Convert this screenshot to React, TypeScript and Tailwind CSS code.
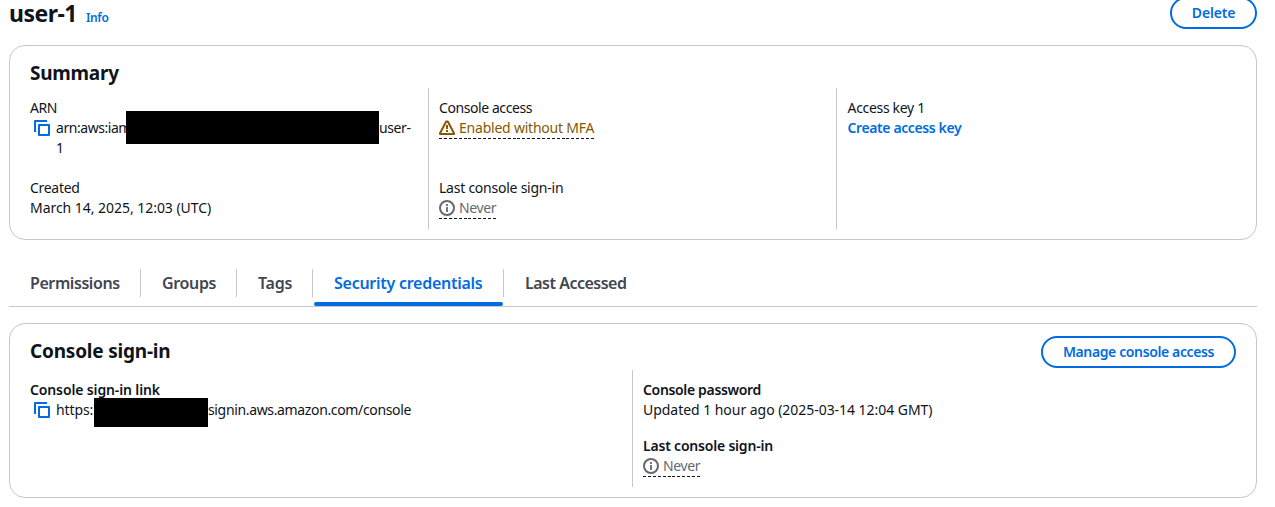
import React from "react";

function CopyIcon() {
  return (
    <svg width="16" height="16" viewBox="0 0 16 16" fill="none" stroke="#006ce0" strokeWidth="2" strokeLinejoin="round" className="mt-[2px] shrink-0">
      <path d="M13 1H1v11" />
      <path d="M5 5h10v10H5z" />
    </svg>
  );
}

function WarningIcon() {
  return (
    <svg width="16" height="16" viewBox="0 0 16 16" fill="none" stroke="#855900" strokeWidth="2" strokeLinejoin="round" className="shrink-0">
      <path d="M7.2 1.5h1.6L15 13.2V14H1v-.8L7.2 1.5Z" />
      <path d="M8 5v4M8 10v2" />
    </svg>
  );
}

function InfoIcon() {
  return (
    <svg width="16" height="16" viewBox="0 0 16 16" fill="none" stroke="#656871" strokeWidth="2" className="shrink-0">
      <circle cx="8" cy="8" r="7" />
      <path d="M8 4v2M8 7v5" strokeWidth="1.8" />
    </svg>
  );
}

function Dashes({ width }: { width: number }) {
  return (
    <svg width={width} height="1" viewBox={`0 0 ${width} 1`} className="block" shapeRendering="crispEdges">
      <path d={`M0 .5H${width}`} stroke="#0f141a" strokeDasharray="3 1.9" />
    </svg>
  );
}

function NeverStatus() {
  return (
    <div>
      <div className="flex h-5 items-center gap-1 text-[#656871]">
        <InfoIcon />
        <span className="tracking-[-0.4px]">Never</span>
      </div>
      <Dashes width={57} />
    </div>
  );
}

export default function App() {
  return (
    <div className="h-[507px] w-full overflow-hidden bg-white pl-[9px] font-['Noto_Sans',sans-serif] text-sm leading-5 text-[#0f141a]">
      <div className="w-[1248px]">
        <header className="flex h-[45px] items-start justify-between">
          <div className="flex items-baseline gap-[9px]">
            <h1 className="text-[23px] leading-[26px] font-bold tracking-[-0.5px]">user-1</h1>
            <a className="text-xs font-semibold tracking-[-0.4px] text-[#006ce0]">Info</a>
          </div>
          <button className="-mt-[3px] h-8 w-[87px] rounded-full border-2 border-[#006ce0] font-semibold tracking-[-0.2px] text-[#006ce0]">Delete</button>
        </header>

        <section className="h-[195px] rounded-2xl border border-[#c6c6cd] pl-5">
          <h2 className="pt-[15px] text-[19px] leading-6 font-bold tracking-[-0.25px]">Summary</h2>
          <div className="mt-[3px] flex h-[141px]">
            <div className="w-[398px] pt-[10px]">
              <div className="tracking-[-0.4px]">ARN</div>
              <div className="flex h-[60px] pl-1">
                <CopyIcon />
                <div className="pl-[6px]">
                  <div className="flex">
                    <span className="w-[70px] tracking-[-0.45px] whitespace-nowrap">arn:aws:iam</span>
                    <span className="relative -mt-[7px] h-[33px] w-[253px] bg-black" />
                    <span className="tracking-[-0.4px]">user-</span>
                  </div>
                  <div className="-mt-[6px]">1</div>
                </div>
              </div>
              <div className="tracking-[-0.3px]">Created</div>
              <div className="tracking-[-0.04px]">March 14, 2025, 12:03 (UTC)</div>
            </div>
            <div className="w-[408px] border-l border-[#c6c6cd] pt-[10px] pl-[10px]">
              <div className="tracking-[-0.42px]">Console access</div>
              <div className="flex h-5 items-center gap-1 text-[#855900]">
                <WarningIcon />
                <span className="tracking-[-0.22px]">Enabled without MFA</span>
              </div>
              <Dashes width={155} />
              <div className="mt-[39px] tracking-[-0.24px]">Last console sign-in</div>
              <NeverStatus />
            </div>
            <div className="border-l border-[#c6c6cd] pt-[10px] pl-[10.5px]">
              <div className="tracking-[-0.32px]">Access key 1</div>
              <a className="font-semibold tracking-[-0.39px] text-[#006ce0]">Create access key</a>
            </div>
          </div>
        </section>

        <nav className="mt-[29px] flex h-[38px] border-b border-[#c6c6cd] text-base leading-7 font-semibold text-[#424650]">
          <div className="h-7 w-[132px] border-r border-[#c6c6cd] pl-[21px] tracking-[-0.42px]">Permissions</div>
          <div className="h-7 w-24 border-r border-[#c6c6cd] pl-[21px] tracking-[-0.35px]">Groups</div>
          <div className="h-7 w-[76px] border-r border-[#c6c6cd] pl-[21px] tracking-[-0.25px]">Tags</div>
          <div className="flex w-[191px] flex-col text-[#006ce0]">
            <div className="h-7 border-r border-[#c6c6cd] pl-[21px] tracking-[-0.26px]">Security credentials</div>
            <div className="mt-[5px] ml-px h-1 w-[189px] rounded-sm bg-[#006ce0]" />
          </div>
          <div className="pl-[21px] tracking-[-0.5px]">Last Accessed</div>
        </nav>

        <section className="mt-4 h-[175px] rounded-2xl border border-[#c6c6cd] px-5">
          <div className="flex h-[46px] items-start justify-between pt-3">
            <h2 className="pt-[3px] text-[19px] leading-6 font-bold tracking-[-0.2px]">Console sign-in</h2>
            <button className="h-8 w-[195px] rounded-full border-2 border-[#006ce0] font-semibold tracking-[-0.38px] text-[#006ce0]">Manage console access</button>
          </div>
          <div className="flex h-[117px]">
            <div className="w-[602px] pt-[10px]">
              <div className="font-semibold tracking-[-0.13px]">Console sign-in link</div>
              <div className="flex h-5 pl-1">
                <CopyIcon />
                <span className="w-[44px] pl-[6px] tracking-[-0.1px] whitespace-nowrap">https:</span>
                <span className="relative -mt-[2px] h-[29px] w-[114px] bg-black" />
                <span className="tracking-[-0.35px]">signin.aws.amazon.com/console</span>
              </div>
            </div>
            <div className="border-l border-[#c6c6cd] pt-[10px] pl-[10px]">
              <div className="font-semibold tracking-[-0.34px]">Console password</div>
              <div className="tracking-[-0.04px]">Updated 1 hour ago (2025-03-14 12:04 GMT)</div>
              <div className="mt-4 font-semibold tracking-[-0.2px]">Last console sign-in</div>
              <NeverStatus />
            </div>
          </div>
        </section>
      </div>
    </div>
  );
}
